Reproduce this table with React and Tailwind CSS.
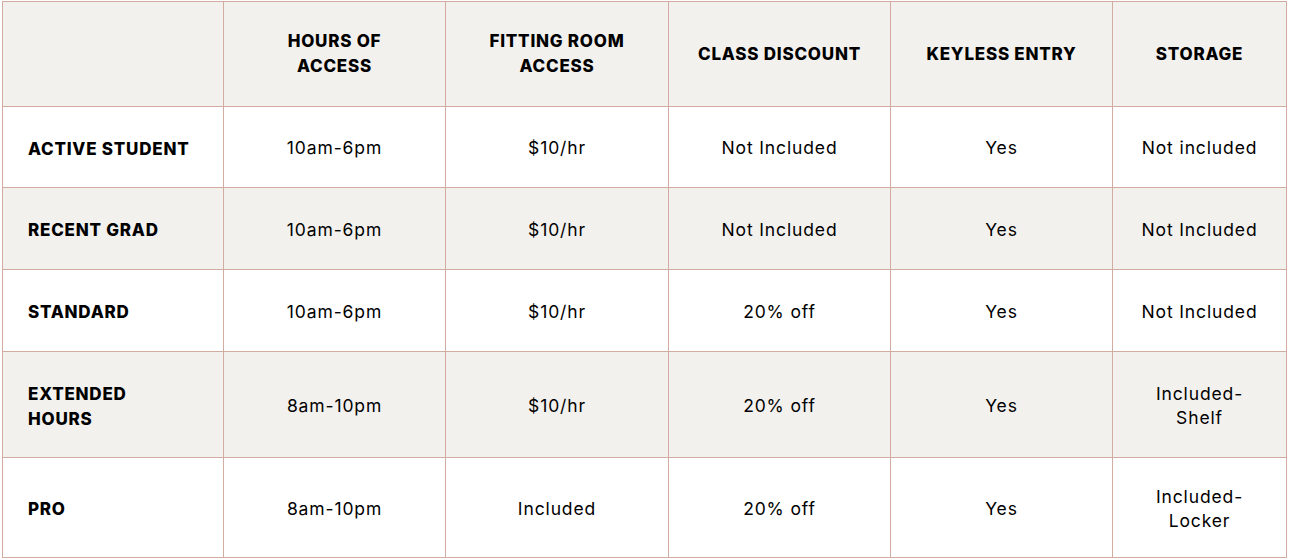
const columns = ['', 'HOURS OF\nACCESS', 'FITTING ROOM\nACCESS', 'CLASS DISCOUNT', 'KEYLESS ENTRY', 'STORAGE'];

const rows = [
    { name: 'ACTIVE STUDENT', cells: ['10am-6pm', '$10/hr', 'Not Included', 'Yes', 'Not included'], h: 'h-[80px]', alt: false },
    { name: 'RECENT GRAD', cells: ['10am-6pm', '$10/hr', 'Not Included', 'Yes', 'Not Included'], h: 'h-[81px]', alt: true },
    { name: 'STANDARD', cells: ['10am-6pm', '$10/hr', '20% off', 'Yes', 'Not Included'], h: 'h-[81px]', alt: false },
    { name: 'EXTENDED\nHOURS', cells: ['8am-10pm', '$10/hr', '20% off', 'Yes', 'Included-\nShelf'], h: 'h-[105px]', alt: true },
    { name: 'PRO', cells: ['8am-10pm', 'Included', '20% off', 'Yes', 'Included-\nLocker'], h: 'h-[99px]', alt: false },
];

const App = () => {
    return (
        <div className="bg-white w-[1290px] h-[560px] pt-px pl-[2px]">
            <div className="grid grid-cols-[220px_221px_222px_221px_221px_173px] gap-px p-px bg-[#d2aca1] w-max text-black font-['Inter',sans-serif]">
                {/* header */}
                {columns.map((col, i) => (
                    <div key={i} className="h-[104px] bg-[#f3f1ee] flex items-center justify-center px-2 text-center whitespace-pre-line text-[17px] leading-[25px] font-extrabold tracking-[0.045em]">
                        {col}
                    </div>
                ))}

                {rows.map(row => (
                    <div key={row.name} className="contents">
                        <div className={`${row.h} ${row.alt ? 'bg-[#f3f1ee]' : 'bg-white'} flex items-center pl-[25px] pr-2 pt-1 whitespace-pre-line text-[17px] leading-[25px] font-extrabold tracking-[0.045em]`}>
                            {row.name}
                        </div>
                        {row.cells.map((c, i) => (
                            <div key={i} className={`${row.h} ${row.alt ? 'bg-[#f3f1ee]' : 'bg-white'} flex items-center justify-center text-center whitespace-pre-line text-[17.5px] leading-[24px] tracking-[0.05em] pt-0.5`}>
                                {c}
                            </div>
                        ))}
                    </div>
                ))}
            </div>
        </div>
    );
};

export default App;
